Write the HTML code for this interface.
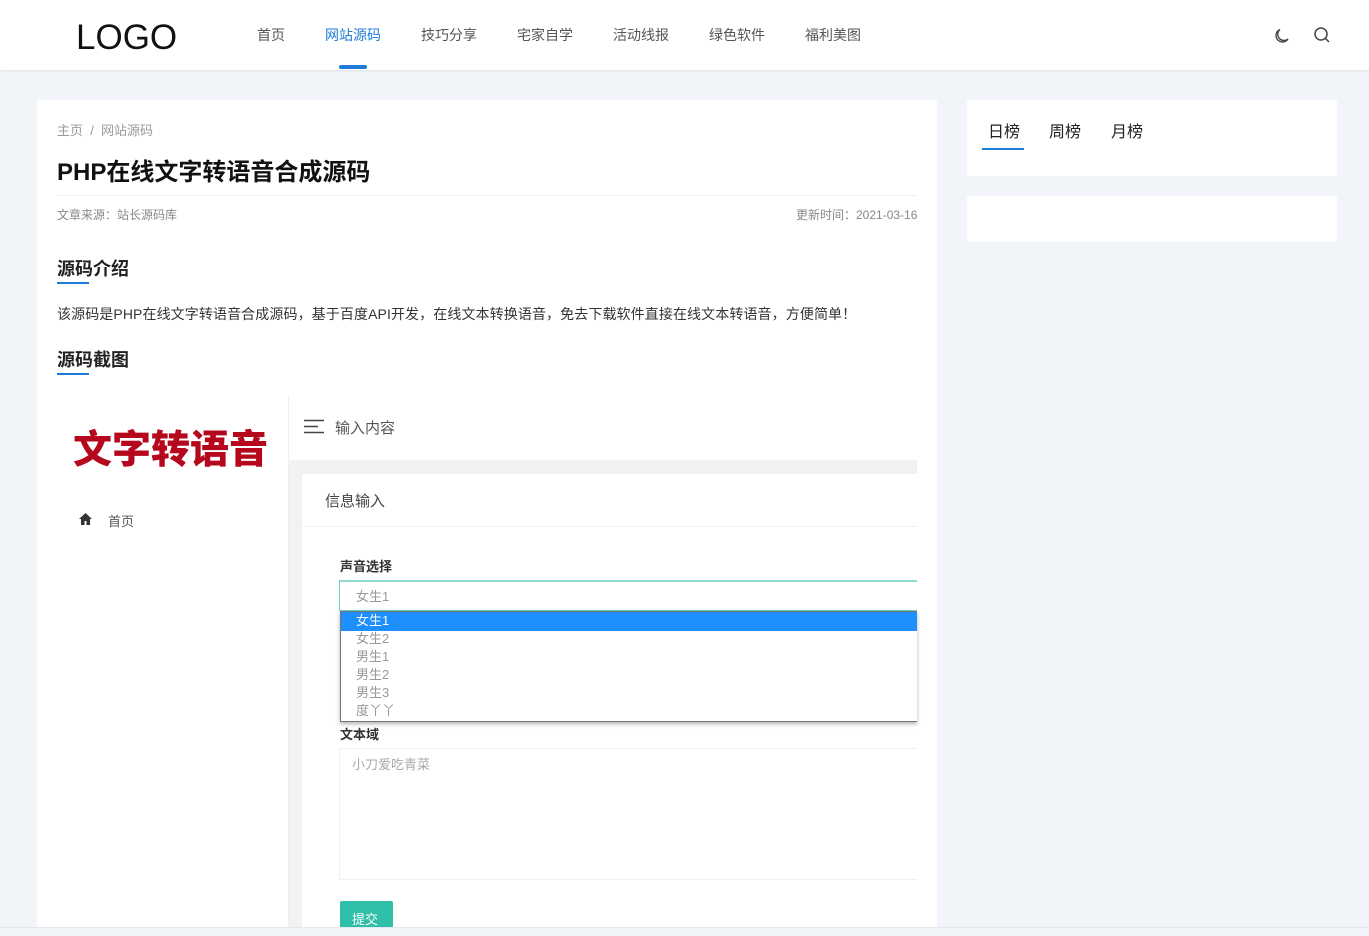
<!DOCTYPE html>
<html><head><meta charset="utf-8"><style>
*{margin:0;padding:0;box-sizing:border-box}
body{width:1369px;height:936px;overflow:hidden;background:#f1f4f8;font-family:"Liberation Sans","Noto Sans CJK SC",sans-serif;position:relative;color:#333}
.a{position:absolute}
.hdr{left:0;top:0;width:1369px;height:70px;background:#fff;box-shadow:0 1px 3px rgba(0,0,0,.08)}
.nav{top:25px;font-size:14px;color:#555}
</style></head><body>
<div class="a hdr"></div>
<div class="a" style="left:76px;top:18px;font-size:35px;color:#111">LOGO</div>
<div class="a nav" style="left:257px">首页</div>
<div class="a nav" style="left:325px;color:#1e7bd6">网站源码</div>
<div class="a" style="left:339px;top:65px;width:28px;height:4px;background:#1e7bd6;border-radius:2px"></div>
<div class="a nav" style="left:421px">技巧分享</div>
<div class="a nav" style="left:517px">宅家自学</div>
<div class="a nav" style="left:613px">活动线报</div>
<div class="a nav" style="left:709px">绿色软件</div>
<div class="a nav" style="left:805px">福利美图</div>
<svg class="a" style="left:1273px;top:27px" width="18" height="18" viewBox="0 0 18 18" fill="none" stroke="#444" stroke-width="1.4"><path d="M7 2.5A6.5 6.5 0 1 0 15 12 5 5 0 0 1 7 2.5z"/></svg>
<svg class="a" style="left:1313px;top:26px" width="18" height="18" viewBox="0 0 18 18" fill="none" stroke="#444" stroke-width="1.5"><circle cx="8" cy="8" r="6"/><path d="M12.5 12.5l3.5 3.5"/></svg>

<div class="a" style="left:37px;top:100px;width:900px;height:836px;background:#fff"></div>
<div class="a" style="left:57px;top:120px;font-size:13px;color:#999">主页 &nbsp;/&nbsp; 网站源码</div>
<div class="a" style="left:57px;top:152px;font-size:24px;font-weight:bold;color:#111">PHP在线文字转语音合成源码</div>
<div class="a" style="left:57px;top:195px;width:860px;height:1px;background:#f0f0f0"></div>
<div class="a" style="left:57px;top:206px;font-size:12px;color:#888">文章来源：站长源码库</div>
<div class="a" style="left:796px;top:206px;font-size:12px;color:#888">更新时间：2021-03-16</div>
<div class="a" style="left:57px;top:255px;font-size:18px;font-weight:bold;color:#222">源码介绍</div>
<div class="a" style="left:57px;top:282px;width:32px;height:2px;background:#1e7bd6"></div>
<div class="a" style="left:57px;top:304px;font-size:14px;color:#333;letter-spacing:0.1px">该源码是PHP在线文字转语音合成源码，基于百度API开发，在线文本转换语音，免去下载软件直接在线文本转语音，方便简单！</div>
<div class="a" style="left:57px;top:346px;font-size:18px;font-weight:bold;color:#222">源码截图</div>
<div class="a" style="left:57px;top:373px;width:32px;height:2px;background:#1e7bd6"></div>

<div class="a" style="left:288px;top:395px;width:1px;height:532px;background:#eee"></div>
<div class="a" style="left:73px;top:422px;font-size:39px;font-weight:900;color:#b5081c;line-height:50px;font-family:'Noto Sans CJK SC',sans-serif">文字转语音</div>
<svg class="a" style="left:79px;top:513px" width="13" height="12" viewBox="0 0 13 12"><path d="M6.5 0L0 6h2v6h3.5V8h2v4H11V6h2z" fill="#333"/></svg>
<div class="a" style="left:108px;top:511px;font-size:13px;color:#555">首页</div>
<svg class="a" style="left:304px;top:419px" width="20" height="15"><path d="M0 1.5h20M0 7.5h14M0 13.5h20" stroke="#444" stroke-width="1.6"/></svg>
<div class="a" style="left:335px;top:417px;font-size:15px;color:#555">输入内容</div>
<div class="a" style="left:289px;top:460px;width:628px;height:467px;background:#f2f2f5"></div>
<div class="a" style="left:302px;top:474px;width:615px;height:453px;background:#fff"></div>
<div class="a" style="left:302px;top:526px;width:615px;height:1px;background:#f0f0f0"></div>
<div class="a" style="left:325px;top:490px;font-size:15px;color:#444">信息输入</div>
<div class="a" style="left:340px;top:556px;font-size:13px;font-weight:bold;color:#333">声音选择</div>
<div class="a" style="left:339px;top:580px;width:578px;height:31px;border:1px solid #6ccfc4;border-top:2px solid #8fdad0;border-right:none;background:#fff"></div>
<div class="a" style="left:356px;top:586px;font-size:13px;color:#999">女生1</div>
<div class="a" style="left:340px;top:611px;width:577px;height:111px;background:#fff;border:1px solid #777;border-right:none;box-shadow:0 2px 4px rgba(0,0,0,.3)"></div>
<div class="a" style="left:341px;top:612px;width:576px;height:19px;background:#1e8fff"></div>
<div class="a" style="left:356px;top:612px;font-size:13px;line-height:18px;color:#fff">女生1</div>
<div class="a" style="left:356px;top:630px;font-size:13px;line-height:18px;color:#999">女生2<br>男生1<br>男生2<br>男生3<br>度丫丫</div>
<div class="a" style="left:340px;top:724px;font-size:13px;font-weight:bold;color:#333">文本域</div>
<div class="a" style="left:339px;top:748px;width:578px;height:132px;border:1px solid #f0f0f0;border-right:none"></div>
<div class="a" style="left:352px;top:754px;font-size:13px;color:#aaa">小刀爱吃青菜</div>
<div class="a" style="left:340px;top:901px;width:53px;height:27px;background:#2fbfa8;border-radius:2px;color:#fff;font-size:13px;padding:8px 0 0 12px">提交</div>
<div class="a" style="left:0;top:927px;width:1369px;height:9px;background:#f1f4f8;border-top:1px solid #e4e7eb"></div>

<div class="a" style="left:967px;top:100px;width:370px;height:76px;background:#fff"></div>
<div class="a" style="left:988px;top:118px;font-size:16px;color:#222">日榜</div>
<div class="a" style="left:1049px;top:118px;font-size:16px;color:#222">周榜</div>
<div class="a" style="left:1111px;top:118px;font-size:16px;color:#222">月榜</div>
<div class="a" style="left:982px;top:148px;width:42px;height:2px;background:#1e7bd6"></div>
<div class="a" style="left:967px;top:196px;width:370px;height:46px;background:#fff"></div>
</body></html>
